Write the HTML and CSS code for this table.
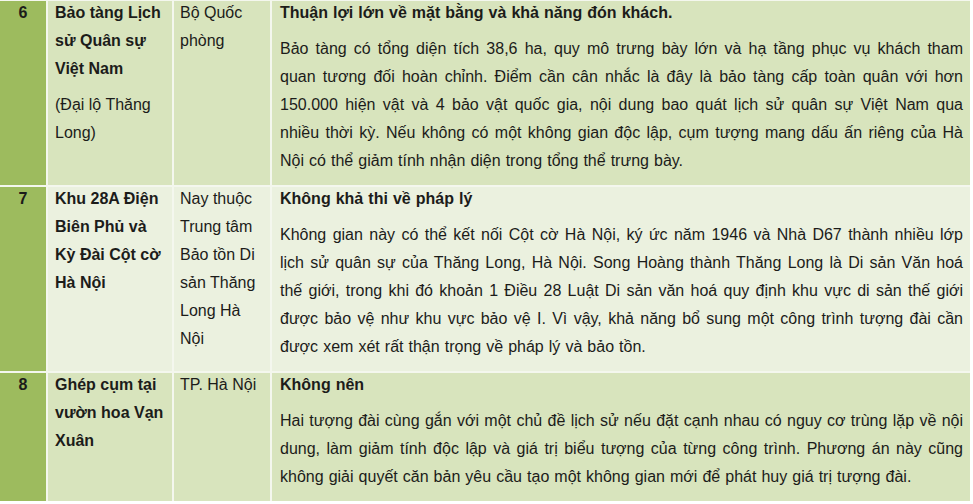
FILE: index.html
```html
<!DOCTYPE html>
<html lang="vi">
<head>
<meta charset="utf-8">
<title>Bảng phương án</title>
<link rel="stylesheet" href="styles.css">
</head>
<body>
<div class="table">
  <div class="row row-dark">
    <div class="cell num">6</div>
    <div class="cell name">
      <p class="b">Bảo tàng Lịch sử Quân sự Việt Nam</p>
      <p>(Đại lộ Thăng Long)</p>
    </div>
    <div class="cell org"><p>Bộ Quốc phòng</p></div>
    <div class="cell desc">
      <p class="b">Thuận lợi lớn về mặt bằng và khả năng đón khách.</p>
      <p class="just">Bảo tàng có tổng diện tích 38,6 ha, quy mô trưng bày lớn và hạ tầng phục vụ khách tham quan tương đối hoàn chỉnh. Điểm cần cân nhắc là đây là bảo tàng cấp toàn quân với hơn 150.000 hiện vật và 4 bảo vật quốc gia, nội dung bao quát lịch sử quân sự Việt Nam qua nhiều thời kỳ. Nếu không có một không gian độc lập, cụm tượng mang dấu ấn riêng của Hà Nội có thể giảm tính nhận diện trong tổng thể trưng bày.</p>
    </div>
  </div>
  <div class="row row-light">
    <div class="cell num">7</div>
    <div class="cell name">
      <p class="b">Khu 28A Điện Biên Phủ và Kỳ Đài Cột cờ Hà Nội</p>
    </div>
    <div class="cell org"><p>Nay thuộc Trung tâm Bảo tồn Di sản Thăng Long Hà Nội</p></div>
    <div class="cell desc">
      <p class="b">Không khả thi về pháp lý</p>
      <p class="just">Không gian này có thể kết nối Cột cờ Hà Nội, ký ức năm 1946 và Nhà D67 thành nhiều lớp lịch sử quân sự của Thăng Long, Hà Nội. Song Hoàng thành Thăng Long là Di sản Văn hoá thế giới, trong khi đó khoản 1 Điều 28 Luật Di sản văn hoá quy định khu vực di sản thế giới được bảo vệ như khu vực bảo vệ I. Vì vậy, khả năng bổ sung một công trình tượng đài cần được xem xét rất thận trọng về pháp lý và bảo tồn.</p>
    </div>
  </div>
  <div class="row row-dark">
    <div class="cell num">8</div>
    <div class="cell name">
      <p class="b">Ghép cụm tại vườn hoa Vạn Xuân</p>
    </div>
    <div class="cell org"><p>TP. Hà Nội</p></div>
    <div class="cell desc">
      <p class="b">Không nên</p>
      <p class="just">Hai tượng đài cùng gắn với một chủ đề lịch sử nếu đặt cạnh nhau có nguy cơ trùng lặp về nội dung, làm giảm tính độc lập và giá trị biểu tượng của từng công trình. Phương án này cũng không giải quyết căn bản yêu cầu tạo một không gian mới để phát huy giá trị tượng đài.</p>
    </div>
  </div>
</div>
</body>
</html>
```
FILE: styles.css
```css
* { box-sizing: border-box; }
html, body {
  margin: 0;
  padding: 0;
  background: #ffffff;
}
body {
  font-family: "Liberation Sans", Arial, sans-serif;
  font-size: 16px;
  line-height: 28px;
  color: #1c1c1a;
}
.table {
  width: 970px;
  display: grid;
  row-gap: 2px;
  padding-top: 1px;
  background: #f4f7ee;
}
.row {
  display: grid;
  grid-template-columns: 46px 124px 96px 698px;
  column-gap: 2px;
}
.cell {
  padding: 0 0 10px 0;
}
.cell > p {
  margin: 0;
}
.cell > p:first-child {
  margin-top: -2px;
}
.cell > p + p {
  margin-top: 8px;
}
.row-dark .cell { background: #d8e4bd; }
.row-light .cell { background: #ebf1df; }
.row .num {
  background: #9dbb5e;
  font-weight: bold;
  text-align: center;
  padding-top: 0;
}
.num {
  line-height: 24px;
}
.name {
  padding-left: 7px;
  padding-right: 3px;
}
.org {
  padding-left: 6px;
  padding-right: 6px;
}
.desc {
  padding-left: 8px;
  padding-right: 7px;
  word-spacing: 0.6px;
}
.b { font-weight: bold; }
.just { text-align: justify; }
```
